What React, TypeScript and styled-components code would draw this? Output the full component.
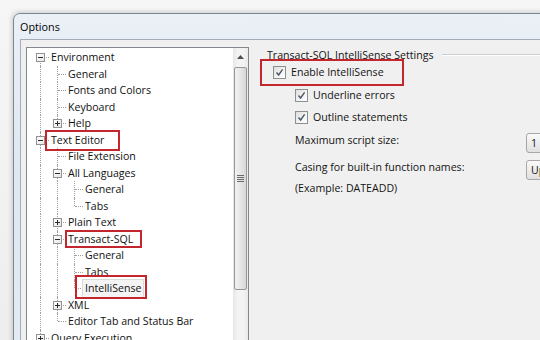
import styled, { createGlobalStyle } from "styled-components";

const GlobalStyle = createGlobalStyle`
  html, body {
    margin: 0;
    padding: 0;
  }
  body {
    width: 540px;
    height: 340px;
    overflow: hidden;
    font-family: "Open Sans", "Noto Sans", sans-serif;
    font-size: 10.6px;
    color: #141414;
  }
`;

const Page = styled.div`
  width: 540px;
  height: 340px;
  overflow: hidden;
  box-sizing: border-box;
  padding: 13px 0 0 13px;
  background: linear-gradient(180deg, #f6f6f6 0%, #eeeeee 100%);
`;

const Window = styled.div`
  width: 560px;
  height: 360px;
  box-sizing: border-box;
  border: 1px solid #7c8794;
  border-radius: 7px 7px 0 0;
  background: linear-gradient(180deg, #eaf0f6 0%, #dfe7f0 45%, #e4ebf2 100%);
  box-shadow: -1px -1px 5px rgba(0, 0, 0, 0.18);
  display: flex;
  flex-direction: column;
`;

const TitleBar = styled.div`
  height: 25px;
  display: flex;
  align-items: center;
  padding-left: 6px;
  font-size: 10.8px;
  color: #000;
`;

const Frame = styled.div`
  flex: 1;
  display: flex;
  padding-left: 6px;
  min-height: 0;
`;

const Client = styled.div`
  flex: 1;
  display: flex;
  background: #f0f0f0;
  border-top: 1px solid #a3acb6;
  border-left: 1px solid #a3acb6;
`;

const TreePanel = styled.div`
  width: 223px;
  flex-shrink: 0;
  box-sizing: border-box;
  margin: 7px 0 0 5px;
  border: 1px solid #828790;
  border-bottom: none;
  background: #fff;
  display: flex;
`;

const TreeBody = styled.div`
  flex: 1;
  padding: 1px 0 0 5px;
  display: flex;
  flex-direction: column;
`;

const Row = styled.div`
  height: 16.5px;
  display: flex;
  align-items: stretch;
  white-space: nowrap;
`;

const Guide = styled.div<{ $line: boolean }>`
  width: 17px;
  flex-shrink: 0;
  position: relative;
  &::before {
    content: "";
    display: ${(p) => (p.$line ? "block" : "none")};
    position: absolute;
    left: 8px;
    top: 0;
    bottom: 0;
    border-left: 1px dotted #a0a0a0;
  }
`;

const Connector = styled.div<{ $up: boolean; $down: boolean }>`
  width: 17px;
  flex-shrink: 0;
  position: relative;
  &::before {
    content: "";
    position: absolute;
    left: 8px;
    top: ${(p) => (p.$up ? "0" : "50%")};
    bottom: ${(p) => (p.$down ? "0" : "50%")};
    border-left: 1px dotted #a0a0a0;
  }
  &::after {
    content: "";
    position: absolute;
    left: 9px;
    right: 0;
    top: 50%;
    border-top: 1px dotted #a0a0a0;
  }
`;

const Expander = styled.div`
  position: absolute;
  left: 4px;
  top: calc(50% - 4px);
  width: 9px;
  height: 9px;
  box-sizing: border-box;
  border: 1px solid #929292;
  background: linear-gradient(135deg, #ffffff 0%, #e6e6e6 100%);
  z-index: 1;
  display: flex;
  align-items: center;
  justify-content: center;
`;

const Label = styled.div<{ $selected?: boolean }>`
  position: relative;
  display: flex;
  align-items: center;
  padding: 0 2px;
  color: #111;
  background: ${(p) => (p.$selected ? "#f4f4f4" : "transparent")};
  outline: ${(p) => (p.$selected ? "1px solid #dadada" : "none")};
`;

const Mark = styled.div<{ $l: number; $t: number; $w: number; $h: number }>`
  position: absolute;
  left: ${(p) => p.$l}px;
  top: ${(p) => p.$t}px;
  width: ${(p) => p.$w}px;
  height: ${(p) => p.$h}px;
  box-sizing: border-box;
  border: 2px solid #c3262d;
  pointer-events: none;
  z-index: 2;
`;

const Scrollbar = styled.div`
  width: 15px;
  flex-shrink: 0;
  background: linear-gradient(90deg, #e6e6e6 0%, #f3f3f3 30%, #f3f3f3 70%, #e9e9e9 100%);
  display: flex;
  flex-direction: column;
  align-items: center;
`;

const ScrollButton = styled.div`
  height: 17px;
  width: 100%;
  display: flex;
  align-items: center;
  justify-content: center;
`;

const Thumb = styled.div`
  margin-top: 2px;
  width: 13px;
  height: 223px;
  box-sizing: border-box;
  border: 1px solid #979797;
  border-radius: 2px;
  background: linear-gradient(90deg, #f2f2f2 0%, #e6e6e6 50%, #d7d7d7 100%);
  display: flex;
  align-items: center;
  justify-content: center;
`;

const Settings = styled.div`
  flex: 1;
  padding: 7px 0 0 18px;
  display: flex;
  flex-direction: column;
  overflow: hidden;
`;

const GroupHeader = styled.div`
  height: 16px;
  display: flex;
  align-items: center;
  white-space: nowrap;
`;

const GroupLine = styled.div`
  flex: 1;
  margin: 0 0 0 8px;
  height: 0;
  border-top: 1px solid #c9ced3;
  border-bottom: 1px solid #ffffff;
`;

const CheckRow = styled.div<{ $indent: number; $gap: number }>`
  position: relative;
  height: 18px;
  margin: ${(p) => p.$gap}px 0 0 ${(p) => p.$indent}px;
  display: flex;
  align-items: center;
  gap: 5px;
  white-space: nowrap;
`;

const Box = styled.div`
  width: 13px;
  height: 13px;
  box-sizing: border-box;
  border: 1px solid #8e8f8f;
  background: linear-gradient(135deg, #dedede 0%, #f4f4f4 60%, #ffffff 100%);
  display: flex;
  align-items: center;
  justify-content: center;
`;

const FieldRow = styled.div<{ $gap: number }>`
  display: flex;
  align-items: flex-start;
  margin: ${(p) => p.$gap}px 0 0 28px;
  white-space: nowrap;
`;

const FieldLabel = styled.div`
  width: 231px;
  flex-shrink: 0;
  line-height: 16px;
`;

const Control = styled.div`
  margin-top: 1px;
  width: 50px;
  height: 20px;
  box-sizing: border-box;
  border: 1px solid #a7a7a7;
  border-radius: 3px;
  background: linear-gradient(180deg, #fbfbfb 0%, #ececec 50%, #e0e0e0 100%);
  padding-left: 4px;
  display: flex;
  align-items: center;
`;

const Note = styled.div`
  margin-left: 28px;
  line-height: 16px;
  white-space: nowrap;
`;

type Node = {
  label: string;
  depth: number;
  exp?: "plus" | "minus";
  selected?: boolean;
  mark?: { l: number; t: number; w: number; h: number };
};

const nodes: Node[] = [
  { label: "Environment", depth: 0, exp: "minus" },
  { label: "General", depth: 1 },
  { label: "Fonts and Colors", depth: 1 },
  { label: "Keyboard", depth: 1 },
  { label: "Help", depth: 1, exp: "plus" },
  { label: "Text Editor", depth: 0, exp: "minus", mark: { l: -4, t: -2, w: 75, h: 21 } },
  { label: "File Extension", depth: 1 },
  { label: "All Languages", depth: 1, exp: "minus" },
  { label: "General", depth: 2 },
  { label: "Tabs", depth: 2 },
  { label: "Plain Text", depth: 1, exp: "plus" },
  { label: "Transact-SQL", depth: 1, exp: "minus", mark: { l: -1, t: -1, w: 77, h: 18 } },
  { label: "General", depth: 2 },
  { label: "Tabs", depth: 2 },
  { label: "IntelliSense", depth: 2, selected: true, mark: { l: -8, t: -5, w: 72, h: 24 } },
  { label: "XML", depth: 1, exp: "plus" },
  { label: "Editor Tab and Status Bar", depth: 1 },
  { label: "Query Execution", depth: 0, exp: "plus" },
];

// a node continues downward if a later sibling comes before its parent closes
const hasNext = (i: number) => {
  const d = nodes[i].depth;
  if (d === 0) return true;
  for (let j = i + 1; j < nodes.length; j++) {
    if (nodes[j].depth < d) return false;
    if (nodes[j].depth === d) return true;
  }
  return false;
};

const ancestorAt = (i: number, level: number) => {
  for (let j = i - 1; j >= 0; j--) if (nodes[j].depth === level) return j;
  return 0;
};

const Sign = ({ plus }: { plus: boolean }) => (
  <svg width="7" height="7" viewBox="0 0 7 7">
    <path d="M1 3.5h5" stroke="#2b2b2b" strokeWidth="1" />
    {plus && <path d="M3.5 1v5" stroke="#2b2b2b" strokeWidth="1" />}
  </svg>
);

const Check = () => (
  <svg width="11" height="11" viewBox="0 0 11 11">
    <path d="M2.5 5.5 L4.6 8 L8.6 2.4" fill="none" stroke="#4d5866" strokeWidth="1.4" />
  </svg>
);

const TreeRow = ({ node, index }: { node: Node; index: number }) => {
  const guides = [];
  for (let lvl = 0; lvl < node.depth; lvl++) {
    guides.push(<Guide key={lvl} $line={hasNext(ancestorAt(index, lvl))} />);
  }
  return (
    <Row>
      {guides}
      <Connector $up={index !== 0} $down={hasNext(index)}>
        {node.exp && (
          <Expander>
            <Sign plus={node.exp === "plus"} />
          </Expander>
        )}
      </Connector>
      <Label $selected={node.selected}>
        {node.label}
        {node.mark && <Mark $l={node.mark.l} $t={node.mark.t} $w={node.mark.w} $h={node.mark.h} />}
      </Label>
    </Row>
  );
};

export default function App() {
  return (
    <>
      <GlobalStyle />
      <Page>
        <Window>
          <TitleBar>Options</TitleBar>
          <Frame>
            <Client>
              <TreePanel>
                <TreeBody>
                  {nodes.map((n, i) => (
                    <TreeRow key={i} node={n} index={i} />
                  ))}
                </TreeBody>
                <Scrollbar>
                  <ScrollButton>
                    <svg width="7" height="4" viewBox="0 0 7 4">
                      <path d="M0 4 L3.5 0 L7 4z" fill="#4f4f4f" />
                    </svg>
                  </ScrollButton>
                  <Thumb>
                    <svg width="7" height="7" viewBox="0 0 7 7">
                      <path d="M0 0.5h7M0 2.5h7M0 4.5h7M0 6.5h7" stroke="#6a6a6a" strokeWidth="1" />
                    </svg>
                  </Thumb>
                </Scrollbar>
              </TreePanel>
              <Settings>
                <GroupHeader>
                  Transact-SQL IntelliSense Settings
                  <GroupLine />
                </GroupHeader>
                <CheckRow $indent={6} $gap={0}>
                  <Box>
                    <Check />
                  </Box>
                  Enable IntelliSense
                  <Mark $l={-13} $t={-4} $w={144} $h={27} />
                </CheckRow>
                <CheckRow $indent={28} $gap={5}>
                  <Box>
                    <Check />
                  </Box>
                  Underline errors
                </CheckRow>
                <CheckRow $indent={28} $gap={4}>
                  <Box>
                    <Check />
                  </Box>
                  Outline statements
                </CheckRow>
                <FieldRow $gap={6}>
                  <FieldLabel>Maximum script size:</FieldLabel>
                  <Control>1</Control>
                </FieldRow>
                <FieldRow $gap={6}>
                  <FieldLabel>Casing for built-in function names:</FieldLabel>
                  <Control>Upper</Control>
                </FieldRow>
                <Note>(Example: DATEADD)</Note>
              </Settings>
            </Client>
          </Frame>
        </Window>
      </Page>
    </>
  );
}
